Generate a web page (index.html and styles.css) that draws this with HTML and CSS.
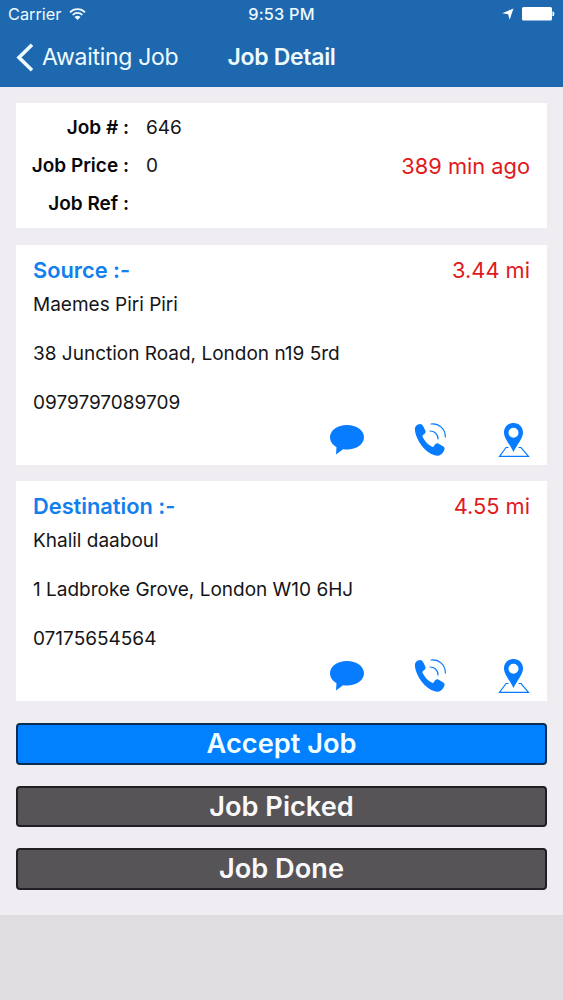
FILE: index.html
```html
<!DOCTYPE html>
<html lang="en">
<head>
<meta charset="utf-8">
<title>Job Detail</title>
<link rel="stylesheet" href="styles.css">
</head>
<body>
<svg class="symbols" aria-hidden="true">
  <symbol id="chat" viewBox="0 0 36 32">
    <path d="M18 1C8.500 1 1 6.400 1 13.200C1 17.500 3.800 21 7.500 23.200L7 30.500L14 25.200C15.300 25.500 16.600 25.600 18 25.600C27.500 25.600 35 20.100 35 13.300C35 6.400 27.500 1 18 1Z" fill="currentColor"/>
  </symbol>
  <symbol id="phone" viewBox="0 0 34 36">
    <path d="M3.800 2.600C6.800 1.200 8.300 2.300 9.600 4.900L11.500 9C12 10.600 11 11.700 9.300 12.700C8 13.600 8.400 14.600 9.200 16C11.300 19.600 13.600 22.200 16.700 24.100C18.400 25.200 19 25.200 20 24C21.300 22 22.400 20.800 24.300 21.600L28.500 24C31 25.300 31.200 26.800 29.700 29.300C27.400 33.300 24.800 34.600 20.500 33.300C10.500 30 2.500 18.500 1 9C.600 6 1.300 3.900 3.800 2.600Z" fill="currentColor"/>
    <path d="M17 2C25 1.200 31.400 6.800 31.400 15M16 9C20.700 9 24 12.300 24 17" fill="none" stroke="currentColor" stroke-width="1.200" stroke-linecap="round"/>
  </symbol>
  <symbol id="pin" viewBox="0 0 32 36">
    <path d="M10.500 25.500H8L1.500 34.400H30.500L23 25.500H20.500" fill="none" stroke="currentColor" stroke-width="1.200"/>
    <path fill-rule="evenodd" d="M15.500 1C9.800 1 6 5.200 6 10.500C6 16.500 12 22.500 15.500 30C19 22.500 25 16.500 25 10.500C25 5.200 21.200 1 15.500 1ZM15.500 5.700A5 5 0 1 1 15.500 15.700A5 5 0 1 1 15.500 5.700Z" fill="currentColor"/>
  </symbol>
</svg>

<header class="top">
  <div class="status">
    <div class="carrier"><span>Carrier</span>
      <svg class="wifi" viewBox="0 0 17 12"><g fill="none" stroke="currentColor" stroke-width="1.700"><path d="M1 4.300C5 .100 12 .100 16 4.300M3.600 7C6.300 4.200 10.700 4.200 13.400 7"/></g><path d="M5.500 8.900C7.200 7.200 9.800 7.200 11.500 8.900L8.500 11.900Z" fill="currentColor"/></svg>
    </div>
    <span class="clock">9:53 PM</span>
    <div class="power">
      <svg class="arrow" viewBox="0 0 12 12"><path d="M11.500.500L7.600 11.800L6.200 6.200L.300 5.200Z" fill="currentColor"/></svg>
      <svg class="battery" viewBox="0 0 33 14"><rect width="30" height="13.500" rx="1.500" fill="currentColor"/><path d="M31 4.700Q33 6.700 31 9Z" fill="currentColor" stroke="currentColor"/></svg>
    </div>
  </div>
  <nav class="nav">
    <div class="back">
      <svg class="chevron" viewBox="0 0 18 29"><path d="M16 1.800L3 14.500L16 27.200" fill="none" stroke="currentColor" stroke-width="3.600"/></svg>
      <span>Awaiting Job</span>
    </div>
    <h1 class="title">Job Detail</h1>
  </nav>
</header>

<main class="content">
  <section class="card summary">
    <dl class="fields">
      <dt>Job # :</dt><dd>646</dd>
      <dt>Job Price :</dt><dd>0</dd>
      <dt>Job Ref :</dt><dd></dd>
    </dl>
    <span class="red ago">389 min ago</span>
  </section>

  <section class="card place">
    <div class="place-head"><h2>Source :-</h2><span class="red">3.44 mi</span></div>
    <p class="name">Maemes Piri Piri</p>
    <p class="street">38 Junction Road, London n19 5rd</p>
    <p class="tel">0979797089709</p>
    <div class="actions">
      <svg class="chat"><use href="#chat"/></svg>
      <svg class="phone"><use href="#phone"/></svg>
      <svg class="pin"><use href="#pin"/></svg>
    </div>
  </section>

  <section class="card place">
    <div class="place-head"><h2 class="dest">Destination :-</h2><span class="red">4.55 mi</span></div>
    <p class="name2">Khalil daaboul</p>
    <p class="street2">1 Ladbroke Grove, London W10 6HJ</p>
    <p class="tel2">07175654564</p>
    <div class="actions">
      <svg class="chat"><use href="#chat"/></svg>
      <svg class="phone"><use href="#phone"/></svg>
      <svg class="pin"><use href="#pin"/></svg>
    </div>
  </section>

  <div class="buttons">
    <button class="btn primary">Accept Job</button>
    <button class="btn">Job Picked</button>
    <button class="btn">Job Done</button>
  </div>
</main>
</body>
</html>
```
FILE: styles.css
```css
* { box-sizing: border-box; }
body {
  margin: 0;
  min-height: 1000px;
  background: #dfdde0;
  color: #151517;
  font-family: Inter, "Liberation Sans", sans-serif;
}
h1, h2, p, dl, dd { margin: 0; }
svg { display: block; }
.symbols { display: none; }

.top { height: 87px; background: #1e68af; color: #eefbff; }
.status {
  display: grid;
  grid-template-columns: 1fr auto 1fr;
  align-items: center;
  height: 28px;
  padding: 0 8px;
  font-size: 16.300px;
  line-height: 28px;
}
.carrier { display: flex; align-items: center; gap: 8px; }
.wifi { width: 17px; height: 12px; }
.clock { font-weight: 500; letter-spacing: .2px; }
.power { display: flex; justify-content: flex-end; align-items: center; gap: 8px; color: #fff; }
.arrow { width: 12px; height: 12px; }
.battery { width: 33px; height: 14px; }
.nav {
  display: grid;
  grid-template-columns: 1fr auto 1fr;
  align-items: center;
  height: 59px;
  line-height: 59px;
  font-size: 23px;
}
.back { display: flex; align-items: center; gap: 8px; padding-left: 16px; letter-spacing: -.3px; }
.chevron { width: 18px; height: 29px; }
.title { font-size: 23px; font-weight: 600; letter-spacing: -.3px; }

.content { height: 828px; padding: 16px 16px 0; background: #efedf1; }
.card { background: #fff; }
.summary {
  display: flex;
  justify-content: space-between;
  align-items: center;
  height: 125px;
  padding: 0 17px 0 0;
}
.fields {
  display: grid;
  grid-template-columns: 113px auto;
  grid-auto-rows: 38px;
  column-gap: 17px;
  line-height: 38px;
  font-size: 19px;
}
.fields dt { text-align: right; font-weight: 600; color: #08080a; }
.red { color: #e0191c; font-size: 21.800px; }
.place { height: 220px; margin-top: 17px; padding: 9px 17px 0; font-size: 19px; }
.place + .place { margin-top: 16px; }
.place-head { display: flex; justify-content: space-between; height: 32px; line-height: 32px; }
.place-head h2 { font-size: 21.800px; font-weight: 600; color: #1180ee; }
.place p { height: 49px; line-height: 38px; }
.place .tel, .place .tel2 { height: 33px; }
.actions { display: flex; align-items: flex-start; justify-content: flex-end; margin-top: 5px; color: #087cff; }
.chat { width: 36px; height: 32px; margin: 2px 49px 0 0; }
.phone { width: 34px; height: 36px; margin-right: 50px; }
.pin { width: 32px; height: 36px; }

.buttons { display: flex; flex-direction: column; gap: 21px; margin-top: 22px; }
.btn {
  height: 41.500px;
  padding: 0;
  border: 2px solid #202024;
  border-radius: 4px;
  background: #565456;
  color: #faf8fa;
  font: 600 27.200px/37px Inter, "Liberation Sans", sans-serif;
}
.primary { background: #0180ff; border-color: #0c2c52; color: #f1ffff; }
```
